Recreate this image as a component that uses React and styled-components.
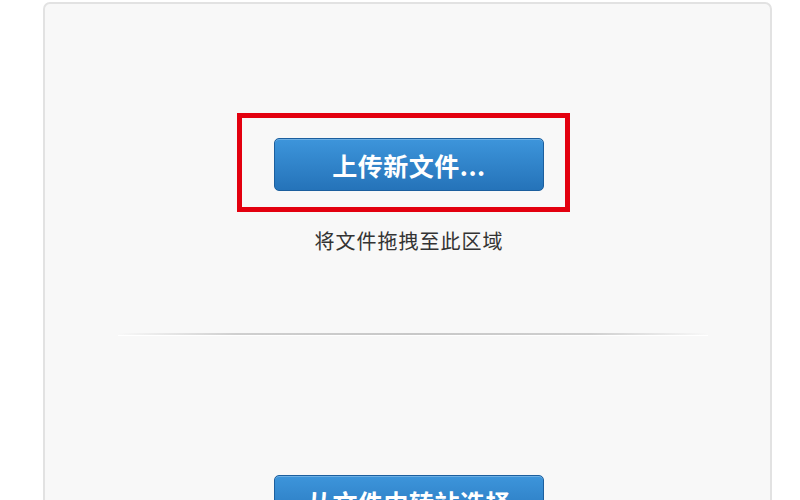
import styled, { createGlobalStyle } from "styled-components";

const GlobalStyle = createGlobalStyle`
  html, body {
    margin: 0;
    padding: 0;
    background: #ffffff;
    font-family: "Noto Sans CJK SC", "Noto Sans", sans-serif;
    overflow: hidden;
  }
`;

const Page = styled.div`
  width: 800px;
  height: 500px;
  overflow: hidden;
  padding-left: 43px;
  padding-top: 2px;
  box-sizing: border-box;
`;

const Panel = styled.div`
  width: 729px;
  height: 620px;
  box-sizing: border-box;
  background: #f8f8f8;
  border: 2px solid #e2e2e2;
  border-radius: 7px;
  display: flex;
  flex-direction: column;
  align-items: center;
  padding-top: 109px;
  padding-left: 3px;
`;

// 빨간 강조 박스 (버튼이 살짝 오른쪽으로 치우침)
const Highlight = styled.div`
  width: 333px;
  height: 99px;
  margin-right: 11px;
  box-sizing: border-box;
  border: 5px solid #e3000f;
  display: flex;
  justify-content: flex-start;
  padding-top: 20px;
  padding-left: 32px;
`;

const BlueButton = styled.button`
  width: 270px;
  height: 53px;
  border: 1px solid #1c5f9e;
  border-radius: 5px;
  background: linear-gradient(#3d95db, #2573b9);
  color: #ffffff;
  font-family: "Noto Sans CJK SC", "Noto Sans", sans-serif;
  font-size: 25px;
  font-weight: 700;
  letter-spacing: 0.5px;
  cursor: pointer;
  box-shadow: inset 0 1px 0 rgba(255, 255, 255, 0.25);
  flex-shrink: 0;
`;

const Caption = styled.div`
  margin-top: 15px;
  font-size: 20px;
  line-height: 28px;
  color: #333333;
  letter-spacing: 1px;
`;

const Divider = styled.div`
  width: 590px;
  height: 2px;
  margin-top: 78px;
  margin-left: 8px;
  background: linear-gradient(
    to right,
    rgba(200, 200, 200, 0),
    #cfcfcf 20%,
    #c8c8c8 50%,
    #cfcfcf 80%,
    rgba(200, 200, 200, 0)
  );
  border-bottom: 1px solid #ffffff;
`;

const Lower = styled.div`
  margin-top: 139px;
`;

export default function App() {
  return (
    <>
      <GlobalStyle />
      <Page>
        <Panel>
          <Highlight>
            <BlueButton>上传新文件...</BlueButton>
          </Highlight>
          <Caption>将文件拖拽至此区域</Caption>
          <Divider />
          <Lower>
            <BlueButton>从文件中转站选择</BlueButton>
          </Lower>
        </Panel>
      </Page>
    </>
  );
}
